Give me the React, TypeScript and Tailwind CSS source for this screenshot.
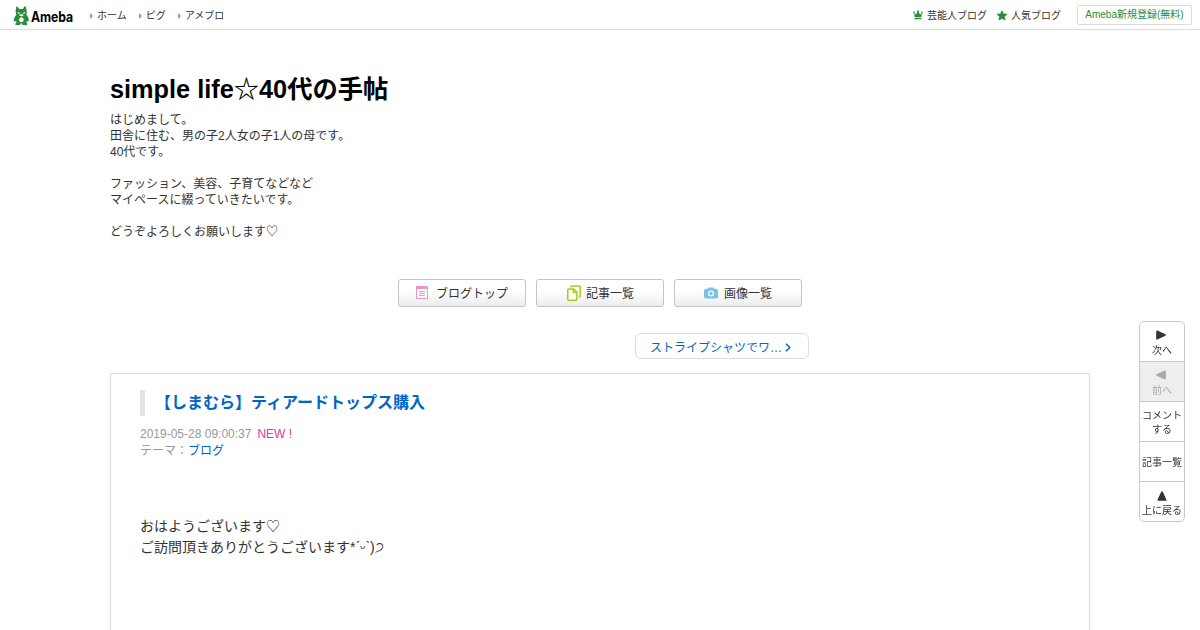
import React from 'react';

const globalLinks = ['ホーム', 'ピグ', 'アメブロ'];

const profileLines = [
  'はじめまして。',
  '田舎に住む、男の子2人女の子1人の母です。',
  '40代です。',
  '',
  'ファッション、美容、子育てなどなど',
  'マイペースに綴っていきたいです。',
  '',
  'どうぞよろしくお願いします♡',
];

function AmebaLogo() {
  return (
    <a href="#" className="flex items-center ml-[13px] h-[29px]">
      <svg width="17" height="20" viewBox="0 0 17 20" className="mt-[2px]">
        <path
          fill="#2d8c3c"
          d="M3.2 1.2 C3.4.4 4.2.2 4.7.9 L6.4 3 H10 L11.4.6 C11.8 0 12.7.1 12.9.9 L13.6 4.2 C14 5.8 13.8 7.4 13.2 8.6 C14.5 10 15.6 12 16 14.4 C15.3 15.7 14.3 15.7 13.6 15.2 L13.4 16.6 C14.3 17.2 14.6 18 14 19 H9.6 L8.8 17.4 H7.6 L7 19 H2.6 C2.1 18 2.4 17.2 3.4 16.7 L3.2 15.1 C2.3 15.7 1.2 15.4.6 14.2 C1 12 2 10 3.5 8.7 C2.8 7.4 2.5 5.8 2.7 4.2 Z"
        />
        <path fill="#fff" d="M4.4 6.1 L7.3 7 C6.8 8.2 5.1 8.3 4.4 6.1 Z M12.4 6.1 L9.5 7 C10 8.2 11.7 8.3 12.4 6.1 Z" />
        <ellipse cx="8.4" cy="9.3" rx="2.1" ry="1" fill="#fff" />
        <ellipse cx="8.4" cy="13.7" rx="2.3" ry="2.5" fill="#fff" />
      </svg>
      <span className="ml-[1px] mt-[4px] w-[42px] origin-left scale-x-[0.87] font-['Inter'] text-[14px] leading-[18px] font-bold tracking-[-0.1px] text-black">
        Ameba
      </span>
    </a>
  );
}

function CrownIcon() {
  return (
    <svg width="10" height="10" viewBox="0 0 11 10" preserveAspectRatio="none" className="-mt-[2px]" fill="#2d8c3c">
      <path d="M1.2 3 L3.3 4.4 L5.1 1.6 H5.9 L7.7 4.4 L9.8 3 L9.2 7 H1.8 Z M1.8 7.8 H9.2 V9.2 H1.8 Z" />
      <circle cx="1.1" cy="2.5" r="0.9" />
      <circle cx="5.5" cy="1.2" r="1" />
      <circle cx="9.9" cy="2.5" r="0.9" />
    </svg>
  );
}

function StarIcon() {
  return (
    <svg width="12" height="11" viewBox="0 0 12 11" className="-mt-[1px]" fill="#2d8c3c" stroke="#2d8c3c" strokeWidth="0.8" strokeLinejoin="round">
      <path d="M6 0.8 L7.5 3.9 L11 4.3 L8.4 6.6 L9.1 10 L6 8.3 L2.9 10 L3.6 6.6 L1 4.3 L4.5 3.9 Z" />
    </svg>
  );
}

function BlogTopIcon() {
  return (
    <svg width="12" height="13" viewBox="0 0 12 13" className="-mt-[1px]">
      <rect x="0.5" y="0.5" width="11" height="12" fill="#fff" stroke="#f095cc" />
      <rect width="12" height="3" fill="#f095cc" />
      <path d="M3 5.5H9M3 7.5H9M3 9.5H9" stroke="#f095cc" />
    </svg>
  );
}

function ArticlesIcon() {
  return (
    <svg width="14" height="16" viewBox="0 0 14 16" fill="none" stroke="#a2cf18" strokeWidth="1.5" strokeLinejoin="round">
      <path d="M4 2.4V1.8Q4 .9 5 .9H12.2Q13.2.9 13.2 1.9V11.2Q13.2 12.2 12 12.2" />
      <path d="M1.8 3.9H6.7L9.9 7.1V14.2Q9.9 15.2 8.9 15.2H1.8Q.8 15.2.8 14.2V4.9Q.8 3.9 1.8 3.9Z" fill="#fff" />
      <path d="M6.3 4V7.5H9.9" />
    </svg>
  );
}

function CameraIcon() {
  return (
    <svg width="14" height="12" viewBox="0 0 14 12">
      <path fill="#79c3e6" d="M2 1.8H3.6L4.8.4H9.2L10.4 1.8H12Q14 1.8 14 3.8V9.5Q14 11.5 12 11.5H2Q0 11.5 0 9.5V3.8Q0 1.8 2 1.8Z" />
      <circle cx="7" cy="6.6" r="2.4" fill="none" stroke="#fff" strokeWidth="1.2" />
    </svg>
  );
}

const menuItems = [
  { label: 'ブログトップ', icon: BlogTopIcon, gap: 'gap-2' },
  { label: '記事一覧', icon: ArticlesIcon, gap: 'gap-[5px] pl-[1px]' },
  { label: '画像一覧', icon: CameraIcon, gap: 'gap-[6px]' },
];

function Header() {
  return (
    <header className="flex h-[30px] items-center border-b border-[#dcdcdc] text-[10px] leading-[15px]">
      <AmebaLogo />
      <nav className="ml-[17px] mt-[2px] flex gap-3">
        {globalLinks.map((label) => (
          <a key={label} href="#" className="flex items-center gap-1">
            <svg width="3" height="6" viewBox="0 0 3 6" fill="#999">
              <path d="M0 0L3 3L0 6Z" />
            </svg>
            {label}
          </a>
        ))}
      </nav>
      <div className="ml-auto mr-2 flex items-center">
        <a href="#" className="mt-[2px] flex items-center gap-1">
          <CrownIcon />
          芸能人ブログ
        </a>
        <a href="#" className="ml-[9px] mt-[2px] flex items-center gap-[3px]">
          <StarIcon />
          人気ブログ
        </a>
        <a href="#" className="ml-4 flex h-5 w-[115px] items-center justify-center rounded-[2px] border border-[#dcdcdc] text-[#2d8c3c]">
          Ameba新規登録(無料)
        </a>
      </div>
    </header>
  );
}

function Triangle({ className }: { className?: string }) {
  return (
    <svg width="10" height="10" viewBox="0 0 10 10" className={className} fill="currentColor" stroke="currentColor" strokeWidth="1.6" strokeLinejoin="round">
      <path d="M1 1.2L9 5L1 8.8Z" />
    </svg>
  );
}

function SideRail() {
  return (
    <aside className="fixed top-[321px] right-[15px] flex h-[201px] w-[46px] flex-col divide-y divide-[#c8c8c8] overflow-hidden rounded-[5px] border border-[#c8c8c8] bg-white text-center text-[10px] leading-[14px]">
      <a href="#" className="flex h-10 flex-col items-center pt-2">
        <Triangle className="-ml-[2px]" />
        <span className="mt-1">次へ</span>
      </a>
      <span className="flex h-10 flex-col items-center bg-[#eee] pt-2 text-[#aaa]">
        <Triangle className="-ml-[2px] rotate-180" />
        <span className="mt-1">前へ</span>
      </span>
      <a href="#" className="flex h-10 flex-col justify-center pt-[3px]">
        <span>コメント</span>
        <span>する</span>
      </a>
      <a href="#" className="flex h-10 items-center justify-center pt-[3px] whitespace-nowrap">
        記事一覧
      </a>
      <a href="#" className="flex h-[39px] flex-col items-center pt-[9px] whitespace-nowrap">
        <Triangle className="-rotate-90" />
        <span className="mt-[3px]">上に戻る</span>
      </a>
    </aside>
  );
}

export default function App() {
  return (
    <div className="h-[630px] overflow-hidden bg-white font-['Liberation_Sans','Noto_Sans_CJK_JP',sans-serif] text-xs leading-4 text-[#333]">
      <Header />

      <main className="mx-auto w-[980px]">
        {/* Blog title and profile */}
        <h1 className="pt-[43px] text-[25.3px] leading-[32px] font-bold text-black">simple life☆40代の手帖</h1>
        <div className="mt-[7px]">
          {profileLines.map((line, index) => (
            <p key={index} className="h-4">{line}</p>
          ))}
        </div>

        <nav className="mt-[39px] flex justify-center gap-[10px]">
          {menuItems.map((item) => {
            const Icon = item.icon;
            return (
              <a
                key={item.label}
                href="#"
                className={`flex h-7 w-32 items-center justify-center rounded-[3px] border border-[#c4c4c4] bg-linear-to-b from-white from-40% to-[#ececec] ${item.gap}`}
              >
                <Icon />
                <span className="pt-[2px]">{item.label}</span>
              </a>
            );
          })}
        </nav>

        {/* Next article */}
        <div className="mt-[26px] pl-[525px]">
          <a href="#" className="flex h-[26px] w-[174px] items-center rounded-[6px] border border-[#dcdcdc] pt-[3px] pl-[14px] text-[#0066c4]">
            ストライプシャツでワ…
            <svg width="6" height="9" viewBox="0 0 6 9" className="-mt-[1px] ml-[3px]" fill="none" stroke="currentColor" strokeWidth="1.4">
              <path d="M1 .8L4.8 4.5L1 8.2" />
            </svg>
          </a>
        </div>

        <article className="mt-[14px] h-[300px] border border-[#dcdcdc] px-[29px] pt-4">
          <h2 className="flex h-[26px] items-center border-l-[5px] border-[#e3e3e3] pl-[10px] text-base font-bold text-[#0066c4]">
            <a href="#">【しまむら】ティアードトップス購入</a>
          </h2>
          <div className="mt-[10px] text-[#999]">
            <p className="h-4">
              2019-05-28 09:00:37<span className="ml-[6px] text-[#e8359f]">NEW !</span>
            </p>
            <p className="h-4 pt-[1px]">
              テーマ：<a href="#" className="text-[#0066c4]">ブログ</a>
            </p>
          </div>
          <div className="mt-[58px] text-sm leading-[21px]">
            <p className="h-[21px]">おはようございます♡</p>
            <p className="h-[21px]">ご訪問頂きありがとうございます*ˊᵕˋ)੭</p>
          </div>
        </article>
      </main>

      <SideRail />
    </div>
  );
}
